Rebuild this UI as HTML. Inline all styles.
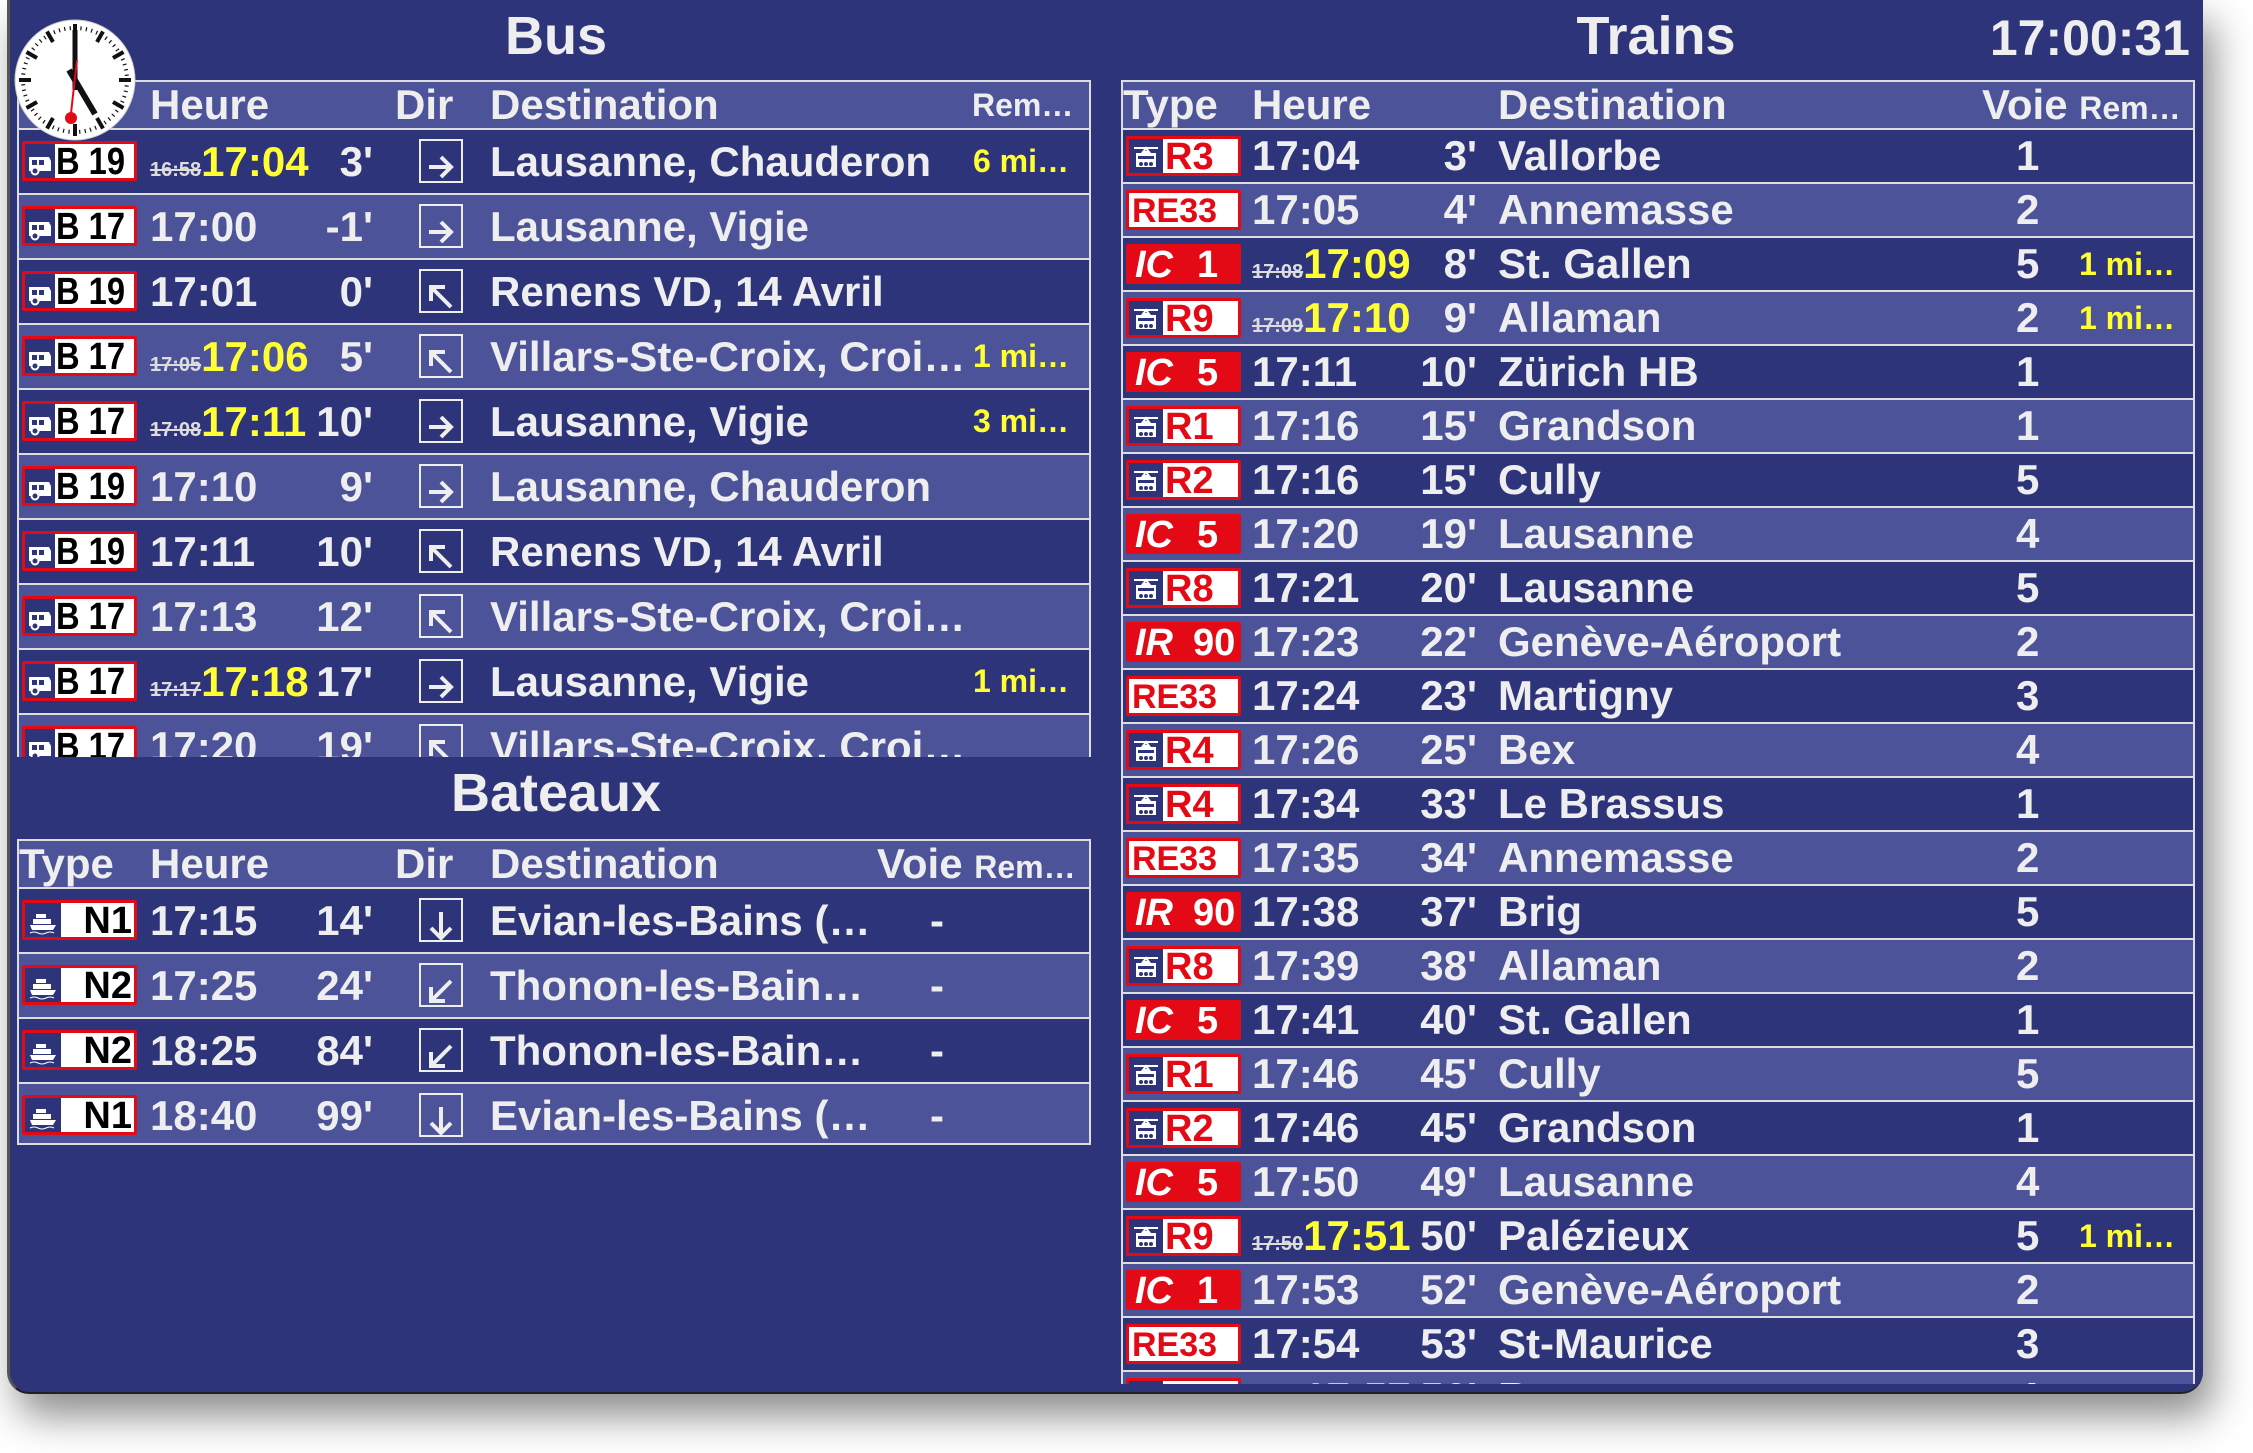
<!DOCTYPE html>
<html><head><meta charset="utf-8"><style>
*{margin:0;padding:0;box-sizing:border-box}
body{width:2253px;height:1453px;background:#fff;position:relative;overflow:hidden;font-family:"Liberation Sans",Arial,sans-serif;font-weight:bold;color:#eee}
#win{position:absolute;left:7px;top:0;width:2196px;height:1394px;background:#2e3479;border-radius:0 0 22px 22px;box-shadow:10px 22px 40px rgba(0,0,0,.45);border-left:3px solid #555;border-bottom:2px solid #222}
.title{position:absolute;font-size:54px;line-height:60px;text-align:center}
.tbl{position:absolute;overflow:hidden;border:2px solid #ddd;border-bottom:none}
.hd{position:absolute;left:0;top:0;width:100%;height:46px;background:#4c5399;font-size:42px;line-height:46px}
.r{position:absolute;left:0;width:100%;border-top:2px solid #ddd;font-size:42px}
.d{background:#2e3479}.l{background:#4c5399}
.r span,.hd span{position:absolute;white-space:nowrap}
.y{color:#ff3}
.s{font-size:20px;text-decoration:line-through;color:#ddd}
.rem{font-size:32px;color:#ff3}
.bg{position:absolute;left:3px;width:115px;height:40px;border:3px solid #e30a16;background:#fff;border-radius:2px;overflow:hidden}
.bg .ic{position:absolute;left:0;top:0;width:34px;height:100%;background:#2e3479}
.bg .ic svg{position:absolute;left:3px;top:5px}
.bg b{position:absolute;font-size:38px;line-height:36px;color:#000;white-space:nowrap}
.bus .bg .ic{width:30px}
.bus .bg .ic svg{left:1px}
.bus .bg b{left:31px!important;transform:scaleX(.86);transform-origin:left center}
.bg b.rd{color:#e30a16}
.icb{background:#e30a16}
.icb b{color:#fff}
.dir{position:absolute;left:400px;width:44px;height:44px;border:2px solid #eee}
</style></head><body>
<div id="win">
<div class="title" style="left:446px;top:6px;width:200px">Bus</div>
<div class="title" style="left:346px;top:763px;width:400px">Bateaux</div>
<div class="title" style="left:1546px;top:6px;width:200px">Trains</div>
<div class="title" style="left:1880px;top:8px;width:300px;text-align:right;font-size:50px">17:00:31</div>

<!-- BUS -->
<div class="tbl bus" style="left:7px;top:80px;width:1074px;height:677px">
<div class="hd"><span style="left:131px">Heure</span><span style="left:376px">Dir</span><span style="left:471px">Destination</span><span style="left:953px;font-size:32px">Rem…</span></div>
<div class="r d" style="top:46px;height:65px;line-height:63px"><div class="bg" style="top:11px"><div class="ic"><svg width="28" height="28"><path d="M3 8h20l2 4v10H3z" fill="#fff"/><path d="M6 11h5v5H6zM13 11h5v5h-5z" fill="#2e3479"/><circle cx="9" cy="22" r="3.5" fill="#2e3479" stroke="#fff" stroke-width="2"/></svg></div><b style="left:36px">B 19</b></div><span style="left:131px"><span class="s" style="position:static">16:58</span><span class="y" style="position:static">17:04</span></span><span style="right:716px">3'</span><div class="dir" style="top:9px"><svg width="40" height="40"><path d="M8 20H30M20 10L30 20L20 30" stroke="#eee" stroke-width="4" fill="none"/></svg></div><span style="left:471px">Lausanne, Chauderon</span><span class="rem" style="right:20px">6 mi…</span></div>
<div class="r l" style="top:111px;height:65px;line-height:63px"><div class="bg" style="top:11px"><div class="ic"><svg width="28" height="28"><path d="M3 8h20l2 4v10H3z" fill="#fff"/><path d="M6 11h5v5H6zM13 11h5v5h-5z" fill="#2e3479"/><circle cx="9" cy="22" r="3.5" fill="#2e3479" stroke="#fff" stroke-width="2"/></svg></div><b style="left:36px">B 17</b></div><span style="left:131px">17:00</span><span style="right:716px">-1'</span><div class="dir" style="top:9px"><svg width="40" height="40"><path d="M8 20H30M20 10L30 20L20 30" stroke="#eee" stroke-width="4" fill="none"/></svg></div><span style="left:471px">Lausanne, Vigie</span></div>
<div class="r d" style="top:176px;height:65px;line-height:63px"><div class="bg" style="top:11px"><div class="ic"><svg width="28" height="28"><path d="M3 8h20l2 4v10H3z" fill="#fff"/><path d="M6 11h5v5H6zM13 11h5v5h-5z" fill="#2e3479"/><circle cx="9" cy="22" r="3.5" fill="#2e3479" stroke="#fff" stroke-width="2"/></svg></div><b style="left:36px">B 19</b></div><span style="left:131px">17:01</span><span style="right:716px">0'</span><div class="dir" style="top:9px"><svg width="40" height="40"><path d="M30 30L10 10M10 24V10H24" stroke="#eee" stroke-width="4" fill="none"/></svg></div><span style="left:471px">Renens VD, 14 Avril</span></div>
<div class="r l" style="top:241px;height:65px;line-height:63px"><div class="bg" style="top:11px"><div class="ic"><svg width="28" height="28"><path d="M3 8h20l2 4v10H3z" fill="#fff"/><path d="M6 11h5v5H6zM13 11h5v5h-5z" fill="#2e3479"/><circle cx="9" cy="22" r="3.5" fill="#2e3479" stroke="#fff" stroke-width="2"/></svg></div><b style="left:36px">B 17</b></div><span style="left:131px"><span class="s" style="position:static">17:05</span><span class="y" style="position:static">17:06</span></span><span style="right:716px">5'</span><div class="dir" style="top:9px"><svg width="40" height="40"><path d="M30 30L10 10M10 24V10H24" stroke="#eee" stroke-width="4" fill="none"/></svg></div><span style="left:471px">Villars-Ste-Croix, Croi…</span><span class="rem" style="right:20px">1 mi…</span></div>
<div class="r d" style="top:306px;height:65px;line-height:63px"><div class="bg" style="top:11px"><div class="ic"><svg width="28" height="28"><path d="M3 8h20l2 4v10H3z" fill="#fff"/><path d="M6 11h5v5H6zM13 11h5v5h-5z" fill="#2e3479"/><circle cx="9" cy="22" r="3.5" fill="#2e3479" stroke="#fff" stroke-width="2"/></svg></div><b style="left:36px">B 17</b></div><span style="left:131px"><span class="s" style="position:static">17:08</span><span class="y" style="position:static">17:11</span></span><span style="right:716px">10'</span><div class="dir" style="top:9px"><svg width="40" height="40"><path d="M8 20H30M20 10L30 20L20 30" stroke="#eee" stroke-width="4" fill="none"/></svg></div><span style="left:471px">Lausanne, Vigie</span><span class="rem" style="right:20px">3 mi…</span></div>
<div class="r l" style="top:371px;height:65px;line-height:63px"><div class="bg" style="top:11px"><div class="ic"><svg width="28" height="28"><path d="M3 8h20l2 4v10H3z" fill="#fff"/><path d="M6 11h5v5H6zM13 11h5v5h-5z" fill="#2e3479"/><circle cx="9" cy="22" r="3.5" fill="#2e3479" stroke="#fff" stroke-width="2"/></svg></div><b style="left:36px">B 19</b></div><span style="left:131px">17:10</span><span style="right:716px">9'</span><div class="dir" style="top:9px"><svg width="40" height="40"><path d="M8 20H30M20 10L30 20L20 30" stroke="#eee" stroke-width="4" fill="none"/></svg></div><span style="left:471px">Lausanne, Chauderon</span></div>
<div class="r d" style="top:436px;height:65px;line-height:63px"><div class="bg" style="top:11px"><div class="ic"><svg width="28" height="28"><path d="M3 8h20l2 4v10H3z" fill="#fff"/><path d="M6 11h5v5H6zM13 11h5v5h-5z" fill="#2e3479"/><circle cx="9" cy="22" r="3.5" fill="#2e3479" stroke="#fff" stroke-width="2"/></svg></div><b style="left:36px">B 19</b></div><span style="left:131px">17:11</span><span style="right:716px">10'</span><div class="dir" style="top:9px"><svg width="40" height="40"><path d="M30 30L10 10M10 24V10H24" stroke="#eee" stroke-width="4" fill="none"/></svg></div><span style="left:471px">Renens VD, 14 Avril</span></div>
<div class="r l" style="top:501px;height:65px;line-height:63px"><div class="bg" style="top:11px"><div class="ic"><svg width="28" height="28"><path d="M3 8h20l2 4v10H3z" fill="#fff"/><path d="M6 11h5v5H6zM13 11h5v5h-5z" fill="#2e3479"/><circle cx="9" cy="22" r="3.5" fill="#2e3479" stroke="#fff" stroke-width="2"/></svg></div><b style="left:36px">B 17</b></div><span style="left:131px">17:13</span><span style="right:716px">12'</span><div class="dir" style="top:9px"><svg width="40" height="40"><path d="M30 30L10 10M10 24V10H24" stroke="#eee" stroke-width="4" fill="none"/></svg></div><span style="left:471px">Villars-Ste-Croix, Croi…</span></div>
<div class="r d" style="top:566px;height:65px;line-height:63px"><div class="bg" style="top:11px"><div class="ic"><svg width="28" height="28"><path d="M3 8h20l2 4v10H3z" fill="#fff"/><path d="M6 11h5v5H6zM13 11h5v5h-5z" fill="#2e3479"/><circle cx="9" cy="22" r="3.5" fill="#2e3479" stroke="#fff" stroke-width="2"/></svg></div><b style="left:36px">B 17</b></div><span style="left:131px"><span class="s" style="position:static">17:17</span><span class="y" style="position:static">17:18</span></span><span style="right:716px">17'</span><div class="dir" style="top:9px"><svg width="40" height="40"><path d="M8 20H30M20 10L30 20L20 30" stroke="#eee" stroke-width="4" fill="none"/></svg></div><span style="left:471px">Lausanne, Vigie</span><span class="rem" style="right:20px">1 mi…</span></div>
<div class="r l" style="top:631px;height:65px;line-height:63px"><div class="bg" style="top:11px"><div class="ic"><svg width="28" height="28"><path d="M3 8h20l2 4v10H3z" fill="#fff"/><path d="M6 11h5v5H6zM13 11h5v5h-5z" fill="#2e3479"/><circle cx="9" cy="22" r="3.5" fill="#2e3479" stroke="#fff" stroke-width="2"/></svg></div><b style="left:36px">B 17</b></div><span style="left:131px">17:20</span><span style="right:716px">19'</span><div class="dir" style="top:9px"><svg width="40" height="40"><path d="M30 30L10 10M10 24V10H24" stroke="#eee" stroke-width="4" fill="none"/></svg></div><span style="left:471px">Villars-Ste-Croix, Croi…</span></div>
</div>

<!-- CLOCK -->
<svg style="position:absolute;left:3px;top:18px" width="124" height="124" viewBox="-62 -62 124 124">
<circle r="60" fill="#fff" stroke="#ccc" stroke-width="1"/>
<g stroke="#111">
<line x1="0" y1="-56" x2="0" y2="-44" stroke-width="4"/><line x1="0" y1="56" x2="0" y2="44" stroke-width="4"/><line x1="56" y1="0" x2="44" y2="0" stroke-width="4"/><line x1="-56" y1="0" x2="-44" y2="0" stroke-width="4"/>
<line x1="28" y1="-48.5" x2="22" y2="-38" stroke-width="4"/><line x1="48.5" y1="-28" x2="38" y2="-22" stroke-width="4"/><line x1="48.5" y1="28" x2="38" y2="22" stroke-width="4"/><line x1="28" y1="48.5" x2="22" y2="38" stroke-width="4"/>
<line x1="-28" y1="48.5" x2="-22" y2="38" stroke-width="4"/><line x1="-48.5" y1="28" x2="-38" y2="22" stroke-width="4"/><line x1="-48.5" y1="-28" x2="-38" y2="-22" stroke-width="4"/><line x1="-28" y1="-48.5" x2="-22" y2="-38" stroke-width="4"/>
<circle r="52" fill="none" stroke-width="4" stroke-dasharray="1.2 4.24"/>
<line x1="0" y1="10" x2="0" y2="-50" stroke-width="5"/>
<line x1="-6" y1="-10" x2="20" y2="34" stroke-width="6"/>
</g>
<line x1="2" y1="-20" x2="-5" y2="42" stroke="#e30a16" stroke-width="2"/>
<circle cx="-4" cy="38" r="6" fill="#e30a16"/>
</svg>

<!-- BATEAUX -->
<div class="tbl" style="left:7px;top:839px;width:1074px;height:306px;border-bottom:2px solid #ddd">
<div class="hd"><span style="left:0">Type</span><span style="left:131px">Heure</span><span style="left:376px">Dir</span><span style="left:471px">Destination</span><span style="left:858px">Voie <span style="position:static;font-size:32px">Rem…</span></span></div>
<div class="r d" style="top:46px;height:65px;line-height:63px"><div class="bg" style="top:11px"><div class="ic" style="width:36px"><svg width="30" height="28"><path d="M8 6h10v4H8zM5 11h18v5H5zM2 17h26l-3 5H4z" fill="#fff"/><path d="M2 25q4 -2 8 0t8 0t8 0" stroke="#fff" fill="none"/></svg></div><b style="right:2px">N1</b></div><span style="left:131px">17:15</span><span style="right:716px">14'</span><div class="dir" style="top:9px"><svg width="40" height="40"><path d="M20 6V32M10 22L20 32L30 22" stroke="#eee" stroke-width="4" fill="none"/></svg></div><span style="left:471px">Evian-les-Bains (…</span><span style="left:911px">-</span></div>
<div class="r l" style="top:111px;height:65px;line-height:63px"><div class="bg" style="top:11px"><div class="ic" style="width:36px"><svg width="30" height="28"><path d="M8 6h10v4H8zM5 11h18v5H5zM2 17h26l-3 5H4z" fill="#fff"/><path d="M2 25q4 -2 8 0t8 0t8 0" stroke="#fff" fill="none"/></svg></div><b style="right:2px">N2</b></div><span style="left:131px">17:25</span><span style="right:716px">24'</span><div class="dir" style="top:9px"><svg width="40" height="40"><path d="M30 10L10 30M10 16V30H24" stroke="#eee" stroke-width="4" fill="none"/></svg></div><span style="left:471px">Thonon-les-Bain…</span><span style="left:911px">-</span></div>
<div class="r d" style="top:176px;height:65px;line-height:63px"><div class="bg" style="top:11px"><div class="ic" style="width:36px"><svg width="30" height="28"><path d="M8 6h10v4H8zM5 11h18v5H5zM2 17h26l-3 5H4z" fill="#fff"/><path d="M2 25q4 -2 8 0t8 0t8 0" stroke="#fff" fill="none"/></svg></div><b style="right:2px">N2</b></div><span style="left:131px">18:25</span><span style="right:716px">84'</span><div class="dir" style="top:9px"><svg width="40" height="40"><path d="M30 10L10 30M10 16V30H24" stroke="#eee" stroke-width="4" fill="none"/></svg></div><span style="left:471px">Thonon-les-Bain…</span><span style="left:911px">-</span></div>
<div class="r l" style="top:241px;height:65px;line-height:63px"><div class="bg" style="top:11px"><div class="ic" style="width:36px"><svg width="30" height="28"><path d="M8 6h10v4H8zM5 11h18v5H5zM2 17h26l-3 5H4z" fill="#fff"/><path d="M2 25q4 -2 8 0t8 0t8 0" stroke="#fff" fill="none"/></svg></div><b style="right:2px">N1</b></div><span style="left:131px">18:40</span><span style="right:716px">99'</span><div class="dir" style="top:9px"><svg width="40" height="40"><path d="M20 6V32M10 22L20 32L30 22" stroke="#eee" stroke-width="4" fill="none"/></svg></div><span style="left:471px">Evian-les-Bains (…</span><span style="left:911px">-</span></div>
</div>

<!-- TRAINS -->
<div class="tbl" style="left:1111px;top:80px;width:1074px;height:1304px">
<div class="hd"><span style="left:0">Type</span><span style="left:129px">Heure</span><span style="left:375px">Destination</span><span style="left:859px">Voie <span style="position:static;font-size:32px">Rem…</span></span></div>
<div class="r d" style="top:46px;height:54px;line-height:52px"><div class="bg" style="top:6px;height:40px"><div class="ic"><svg width="28" height="30"><path d="M2 4h24M14 4l-3 4h6z" stroke="#fff" fill="none" stroke-width="2"/><path d="M4 9h20v14H4z" fill="#fff"/><path d="M6 12h16v3H6z" fill="#2e3479"/><circle cx="9" cy="20" r="2" fill="#2e3479"/><circle cx="14" cy="20" r="2" fill="#2e3479"/><circle cx="19" cy="20" r="2" fill="#2e3479"/></svg></div><b class="rd" style="left:36px">R3</b></div><span style="left:129px">17:04</span><span style="right:716px">3'</span><span style="left:375px">Vallorbe</span><span style="left:893px">1</span></div>
<div class="r l" style="top:100px;height:54px;line-height:52px"><div class="bg" style="top:6px;height:40px"><b class="rd" style="left:3px;font-size:34px">RE33</b></div><span style="left:129px">17:05</span><span style="right:716px">4'</span><span style="left:375px">Annemasse</span><span style="left:893px">2</span></div>
<div class="r d" style="top:154px;height:54px;line-height:52px"><div class="bg icb" style="top:6px;height:40px"><b style="left:6px;font-style:italic">IC</b><b style="left:68px">1</b></div><span style="left:129px"><span class="s" style="position:static">17:08</span><span class="y" style="position:static">17:09</span></span><span style="right:716px">8'</span><span style="left:375px">St. Gallen</span><span style="left:893px">5</span><span class="rem" style="right:18px">1 mi…</span></div>
<div class="r l" style="top:208px;height:54px;line-height:52px"><div class="bg" style="top:6px;height:40px"><div class="ic"><svg width="28" height="30"><path d="M2 4h24M14 4l-3 4h6z" stroke="#fff" fill="none" stroke-width="2"/><path d="M4 9h20v14H4z" fill="#fff"/><path d="M6 12h16v3H6z" fill="#2e3479"/><circle cx="9" cy="20" r="2" fill="#2e3479"/><circle cx="14" cy="20" r="2" fill="#2e3479"/><circle cx="19" cy="20" r="2" fill="#2e3479"/></svg></div><b class="rd" style="left:36px">R9</b></div><span style="left:129px"><span class="s" style="position:static">17:09</span><span class="y" style="position:static">17:10</span></span><span style="right:716px">9'</span><span style="left:375px">Allaman</span><span style="left:893px">2</span><span class="rem" style="right:18px">1 mi…</span></div>
<div class="r d" style="top:262px;height:54px;line-height:52px"><div class="bg icb" style="top:6px;height:40px"><b style="left:6px;font-style:italic">IC</b><b style="left:68px">5</b></div><span style="left:129px">17:11</span><span style="right:716px">10'</span><span style="left:375px">Zürich HB</span><span style="left:893px">1</span></div>
<div class="r l" style="top:316px;height:54px;line-height:52px"><div class="bg" style="top:6px;height:40px"><div class="ic"><svg width="28" height="30"><path d="M2 4h24M14 4l-3 4h6z" stroke="#fff" fill="none" stroke-width="2"/><path d="M4 9h20v14H4z" fill="#fff"/><path d="M6 12h16v3H6z" fill="#2e3479"/><circle cx="9" cy="20" r="2" fill="#2e3479"/><circle cx="14" cy="20" r="2" fill="#2e3479"/><circle cx="19" cy="20" r="2" fill="#2e3479"/></svg></div><b class="rd" style="left:36px">R1</b></div><span style="left:129px">17:16</span><span style="right:716px">15'</span><span style="left:375px">Grandson</span><span style="left:893px">1</span></div>
<div class="r d" style="top:370px;height:54px;line-height:52px"><div class="bg" style="top:6px;height:40px"><div class="ic"><svg width="28" height="30"><path d="M2 4h24M14 4l-3 4h6z" stroke="#fff" fill="none" stroke-width="2"/><path d="M4 9h20v14H4z" fill="#fff"/><path d="M6 12h16v3H6z" fill="#2e3479"/><circle cx="9" cy="20" r="2" fill="#2e3479"/><circle cx="14" cy="20" r="2" fill="#2e3479"/><circle cx="19" cy="20" r="2" fill="#2e3479"/></svg></div><b class="rd" style="left:36px">R2</b></div><span style="left:129px">17:16</span><span style="right:716px">15'</span><span style="left:375px">Cully</span><span style="left:893px">5</span></div>
<div class="r l" style="top:424px;height:54px;line-height:52px"><div class="bg icb" style="top:6px;height:40px"><b style="left:6px;font-style:italic">IC</b><b style="left:68px">5</b></div><span style="left:129px">17:20</span><span style="right:716px">19'</span><span style="left:375px">Lausanne</span><span style="left:893px">4</span></div>
<div class="r d" style="top:478px;height:54px;line-height:52px"><div class="bg" style="top:6px;height:40px"><div class="ic"><svg width="28" height="30"><path d="M2 4h24M14 4l-3 4h6z" stroke="#fff" fill="none" stroke-width="2"/><path d="M4 9h20v14H4z" fill="#fff"/><path d="M6 12h16v3H6z" fill="#2e3479"/><circle cx="9" cy="20" r="2" fill="#2e3479"/><circle cx="14" cy="20" r="2" fill="#2e3479"/><circle cx="19" cy="20" r="2" fill="#2e3479"/></svg></div><b class="rd" style="left:36px">R8</b></div><span style="left:129px">17:21</span><span style="right:716px">20'</span><span style="left:375px">Lausanne</span><span style="left:893px">5</span></div>
<div class="r l" style="top:532px;height:54px;line-height:52px"><div class="bg icb" style="top:6px;height:40px"><b style="left:6px;font-style:italic">IR</b><b style="left:64px">90</b></div><span style="left:129px">17:23</span><span style="right:716px">22'</span><span style="left:375px">Genève-Aéroport</span><span style="left:893px">2</span></div>
<div class="r d" style="top:586px;height:54px;line-height:52px"><div class="bg" style="top:6px;height:40px"><b class="rd" style="left:3px;font-size:34px">RE33</b></div><span style="left:129px">17:24</span><span style="right:716px">23'</span><span style="left:375px">Martigny</span><span style="left:893px">3</span></div>
<div class="r l" style="top:640px;height:54px;line-height:52px"><div class="bg" style="top:6px;height:40px"><div class="ic"><svg width="28" height="30"><path d="M2 4h24M14 4l-3 4h6z" stroke="#fff" fill="none" stroke-width="2"/><path d="M4 9h20v14H4z" fill="#fff"/><path d="M6 12h16v3H6z" fill="#2e3479"/><circle cx="9" cy="20" r="2" fill="#2e3479"/><circle cx="14" cy="20" r="2" fill="#2e3479"/><circle cx="19" cy="20" r="2" fill="#2e3479"/></svg></div><b class="rd" style="left:36px">R4</b></div><span style="left:129px">17:26</span><span style="right:716px">25'</span><span style="left:375px">Bex</span><span style="left:893px">4</span></div>
<div class="r d" style="top:694px;height:54px;line-height:52px"><div class="bg" style="top:6px;height:40px"><div class="ic"><svg width="28" height="30"><path d="M2 4h24M14 4l-3 4h6z" stroke="#fff" fill="none" stroke-width="2"/><path d="M4 9h20v14H4z" fill="#fff"/><path d="M6 12h16v3H6z" fill="#2e3479"/><circle cx="9" cy="20" r="2" fill="#2e3479"/><circle cx="14" cy="20" r="2" fill="#2e3479"/><circle cx="19" cy="20" r="2" fill="#2e3479"/></svg></div><b class="rd" style="left:36px">R4</b></div><span style="left:129px">17:34</span><span style="right:716px">33'</span><span style="left:375px">Le Brassus</span><span style="left:893px">1</span></div>
<div class="r l" style="top:748px;height:54px;line-height:52px"><div class="bg" style="top:6px;height:40px"><b class="rd" style="left:3px;font-size:34px">RE33</b></div><span style="left:129px">17:35</span><span style="right:716px">34'</span><span style="left:375px">Annemasse</span><span style="left:893px">2</span></div>
<div class="r d" style="top:802px;height:54px;line-height:52px"><div class="bg icb" style="top:6px;height:40px"><b style="left:6px;font-style:italic">IR</b><b style="left:64px">90</b></div><span style="left:129px">17:38</span><span style="right:716px">37'</span><span style="left:375px">Brig</span><span style="left:893px">5</span></div>
<div class="r l" style="top:856px;height:54px;line-height:52px"><div class="bg" style="top:6px;height:40px"><div class="ic"><svg width="28" height="30"><path d="M2 4h24M14 4l-3 4h6z" stroke="#fff" fill="none" stroke-width="2"/><path d="M4 9h20v14H4z" fill="#fff"/><path d="M6 12h16v3H6z" fill="#2e3479"/><circle cx="9" cy="20" r="2" fill="#2e3479"/><circle cx="14" cy="20" r="2" fill="#2e3479"/><circle cx="19" cy="20" r="2" fill="#2e3479"/></svg></div><b class="rd" style="left:36px">R8</b></div><span style="left:129px">17:39</span><span style="right:716px">38'</span><span style="left:375px">Allaman</span><span style="left:893px">2</span></div>
<div class="r d" style="top:910px;height:54px;line-height:52px"><div class="bg icb" style="top:6px;height:40px"><b style="left:6px;font-style:italic">IC</b><b style="left:68px">5</b></div><span style="left:129px">17:41</span><span style="right:716px">40'</span><span style="left:375px">St. Gallen</span><span style="left:893px">1</span></div>
<div class="r l" style="top:964px;height:54px;line-height:52px"><div class="bg" style="top:6px;height:40px"><div class="ic"><svg width="28" height="30"><path d="M2 4h24M14 4l-3 4h6z" stroke="#fff" fill="none" stroke-width="2"/><path d="M4 9h20v14H4z" fill="#fff"/><path d="M6 12h16v3H6z" fill="#2e3479"/><circle cx="9" cy="20" r="2" fill="#2e3479"/><circle cx="14" cy="20" r="2" fill="#2e3479"/><circle cx="19" cy="20" r="2" fill="#2e3479"/></svg></div><b class="rd" style="left:36px">R1</b></div><span style="left:129px">17:46</span><span style="right:716px">45'</span><span style="left:375px">Cully</span><span style="left:893px">5</span></div>
<div class="r d" style="top:1018px;height:54px;line-height:52px"><div class="bg" style="top:6px;height:40px"><div class="ic"><svg width="28" height="30"><path d="M2 4h24M14 4l-3 4h6z" stroke="#fff" fill="none" stroke-width="2"/><path d="M4 9h20v14H4z" fill="#fff"/><path d="M6 12h16v3H6z" fill="#2e3479"/><circle cx="9" cy="20" r="2" fill="#2e3479"/><circle cx="14" cy="20" r="2" fill="#2e3479"/><circle cx="19" cy="20" r="2" fill="#2e3479"/></svg></div><b class="rd" style="left:36px">R2</b></div><span style="left:129px">17:46</span><span style="right:716px">45'</span><span style="left:375px">Grandson</span><span style="left:893px">1</span></div>
<div class="r l" style="top:1072px;height:54px;line-height:52px"><div class="bg icb" style="top:6px;height:40px"><b style="left:6px;font-style:italic">IC</b><b style="left:68px">5</b></div><span style="left:129px">17:50</span><span style="right:716px">49'</span><span style="left:375px">Lausanne</span><span style="left:893px">4</span></div>
<div class="r d" style="top:1126px;height:54px;line-height:52px"><div class="bg" style="top:6px;height:40px"><div class="ic"><svg width="28" height="30"><path d="M2 4h24M14 4l-3 4h6z" stroke="#fff" fill="none" stroke-width="2"/><path d="M4 9h20v14H4z" fill="#fff"/><path d="M6 12h16v3H6z" fill="#2e3479"/><circle cx="9" cy="20" r="2" fill="#2e3479"/><circle cx="14" cy="20" r="2" fill="#2e3479"/><circle cx="19" cy="20" r="2" fill="#2e3479"/></svg></div><b class="rd" style="left:36px">R9</b></div><span style="left:129px"><span class="s" style="position:static">17:50</span><span class="y" style="position:static">17:51</span></span><span style="right:716px">50'</span><span style="left:375px">Palézieux</span><span style="left:893px">5</span><span class="rem" style="right:18px">1 mi…</span></div>
<div class="r l" style="top:1180px;height:54px;line-height:52px"><div class="bg icb" style="top:6px;height:40px"><b style="left:6px;font-style:italic">IC</b><b style="left:68px">1</b></div><span style="left:129px">17:53</span><span style="right:716px">52'</span><span style="left:375px">Genève-Aéroport</span><span style="left:893px">2</span></div>
<div class="r d" style="top:1234px;height:54px;line-height:52px"><div class="bg" style="top:6px;height:40px"><b class="rd" style="left:3px;font-size:34px">RE33</b></div><span style="left:129px">17:54</span><span style="right:716px">53'</span><span style="left:375px">St-Maurice</span><span style="left:893px">3</span></div>
<div class="r l" style="top:1288px;height:54px;line-height:52px"><div class="bg" style="top:6px;height:40px"><div class="ic"></div><b class="rd" style="left:36px">R9</b></div><span style="left:129px"><span class="s" style="position:static">17:56</span><span class="y" style="position:static">17:57</span></span><span style="right:716px">56'</span><span style="left:375px">Romont</span><span style="left:893px">4</span><span class="rem" style="right:18px">1 mi…</span></div>
</div>
</div>
</body></html>
